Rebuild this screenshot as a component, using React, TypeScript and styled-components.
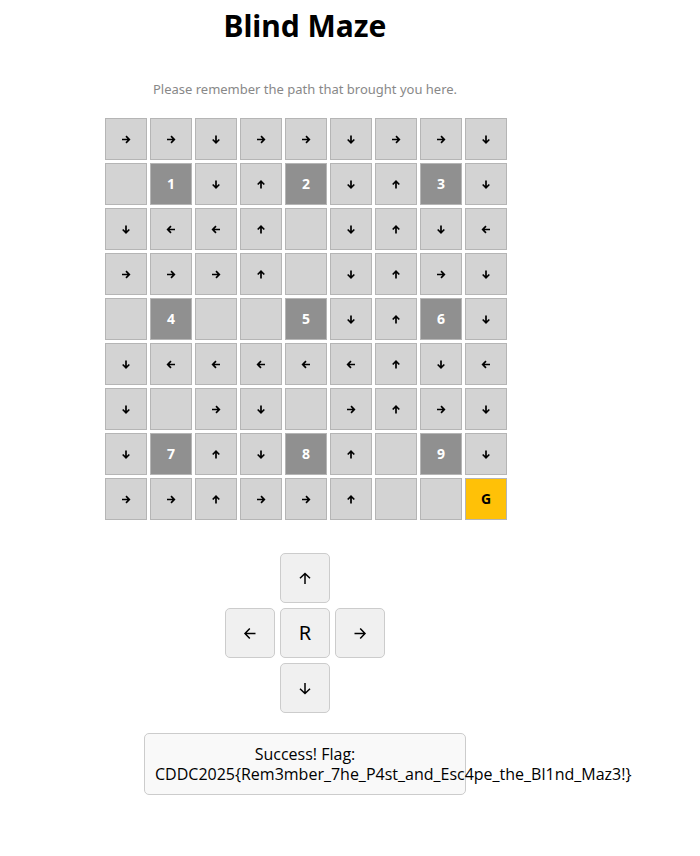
import React from "react";
import styled, { createGlobalStyle } from "styled-components";

const GlobalStyle = createGlobalStyle`
  * {
    box-sizing: border-box;
  }
  body {
    margin: 0;
    background: #fff;
    color: #000;
    font-family: "Noto Sans", "Open Sans", sans-serif;
  }
`;

const Page = styled.main`
  display: flex;
  flex-direction: column;
  align-items: center;
  width: 100%;
  max-width: 610px;
  padding: 6px 0 40px;
`;

const Title = styled.h1`
  margin: 0;
  font-size: 30px;
  line-height: 40px;
  font-weight: 700;
`;

const Hint = styled.p`
  margin: 33px 0 19px;
  font-size: 13px;
  line-height: 20px;
  color: #888;
`;

const Maze = styled.div`
  display: grid;
  width: 400px;
  grid-template-columns: repeat(9, 42px);
  grid-auto-rows: 42px;
  gap: 3px;
`;

type Kind = "path" | "number" | "goal";

const fills: Record<Kind, string> = {
  path: "#d3d3d3",
  number: "#909090",
  goal: "#ffc107",
};

const Cell = styled.div<{ $kind: Kind }>`
  display: flex;
  align-items: center;
  justify-content: center;
  border: 1px solid #b5b5b5;
  background: ${({ $kind }) => fills[$kind]};
  color: ${({ $kind }) => ($kind === "number" ? "#fff" : "#000")};
  font-size: 14px;
  line-height: 20px;
  font-weight: 700;
`;

const Controls = styled.div`
  display: grid;
  grid-template-columns: repeat(3, 50px);
  grid-template-areas: ". up ." "left reset right" ". down .";
  grid-auto-rows: 50px;
  gap: 5px;
  margin-top: 33px;
`;

const ControlButton = styled.button<{ $area: string }>`
  grid-area: ${({ $area }) => $area};
  display: flex;
  align-items: center;
  justify-content: center;
  padding: 0;
  border: 1px solid #ccc;
  border-radius: 5px;
  background: #f0f0f0;
  color: #000;
  font-family: inherit;
  font-size: 20px;
  line-height: 24px;
  cursor: pointer;
`;

const Message = styled.output`
  width: 322px;
  max-width: 100%;
  margin-top: 20px;
  padding: 10px;
  border: 1px solid #ccc;
  border-radius: 5px;
  background: #f9f9f9;
  font-family: "Open Sans", "Noto Sans", sans-serif;
  font-size: 16px;
  line-height: 20px;
  text-align: center;
`;

type Direction = "up" | "down" | "left" | "right";

const angles: Record<Direction, number> = { right: 0, down: 90, left: 180, up: 270 };

function SmallArrow({ direction }: { direction: Direction }) {
  return (
    <svg width="10" height="10" viewBox="0 0 10 10" role="img" aria-label={direction}>
      <path
        d="M1 5.5H8.4M5 2.2L8.3 5.5L5 8.8"
        transform={`rotate(${angles[direction]} 5 5.5)`}
        fill="none"
        stroke="currentColor"
        strokeWidth="1.7"
      />
    </svg>
  );
}

function LargeArrow({ direction }: { direction: Direction }) {
  return (
    <svg width="14" height="14" viewBox="0 0 14 14" aria-hidden="true">
      <path
        d="M1.5 7.5H12M7.2 2.5L12 7.5L7.2 12.5"
        transform={`rotate(${angles[direction]} 7 7.5)`}
        fill="none"
        stroke="currentColor"
        strokeWidth="1.5"
      />
    </svg>
  );
}

const rows = [
  "RRDRRDRRD",
  " 1DU2DU3D",
  "DLLU DUDL",
  "RRRU DURD",
  " 4  5DU6D",
  "DLLLLLUDL",
  "D RD RURD",
  "D7UD8U 9D",
  "RRURRU  G",
];

const directions: Record<string, Direction> = {
  R: "right",
  D: "down",
  L: "left",
  U: "up",
};

function kindOf(mark: string): Kind {
  if (mark === "G") return "goal";
  return /\d/.test(mark) ? "number" : "path";
}

export default function App() {
  return (
    <>
      <GlobalStyle />
      <Page>
        <Title>Blind Maze</Title>
        <Hint>Please remember the path that brought you here.</Hint>
        <Maze>
          {rows.flatMap((row, y) =>
            row.split("").map((mark, x) => (
              <Cell key={`${y}-${x}`} $kind={kindOf(mark)}>
                {directions[mark] ? <SmallArrow direction={directions[mark]} /> : mark.trim()}
              </Cell>
            ))
          )}
        </Maze>
        <Controls>
          <ControlButton $area="up" aria-label="Move up">
            <LargeArrow direction="up" />
          </ControlButton>
          <ControlButton $area="left" aria-label="Move left">
            <LargeArrow direction="left" />
          </ControlButton>
          <ControlButton $area="reset">R</ControlButton>
          <ControlButton $area="right" aria-label="Move right">
            <LargeArrow direction="right" />
          </ControlButton>
          <ControlButton $area="down" aria-label="Move down">
            <LargeArrow direction="down" />
          </ControlButton>
        </Controls>
        <Message>
          Success! Flag: CDDC2025&#123;Rem3mber_7he_P4st_and_Esc4pe_the_Bl1nd_Maz3!&#125;
        </Message>
      </Page>
    </>
  );
}
